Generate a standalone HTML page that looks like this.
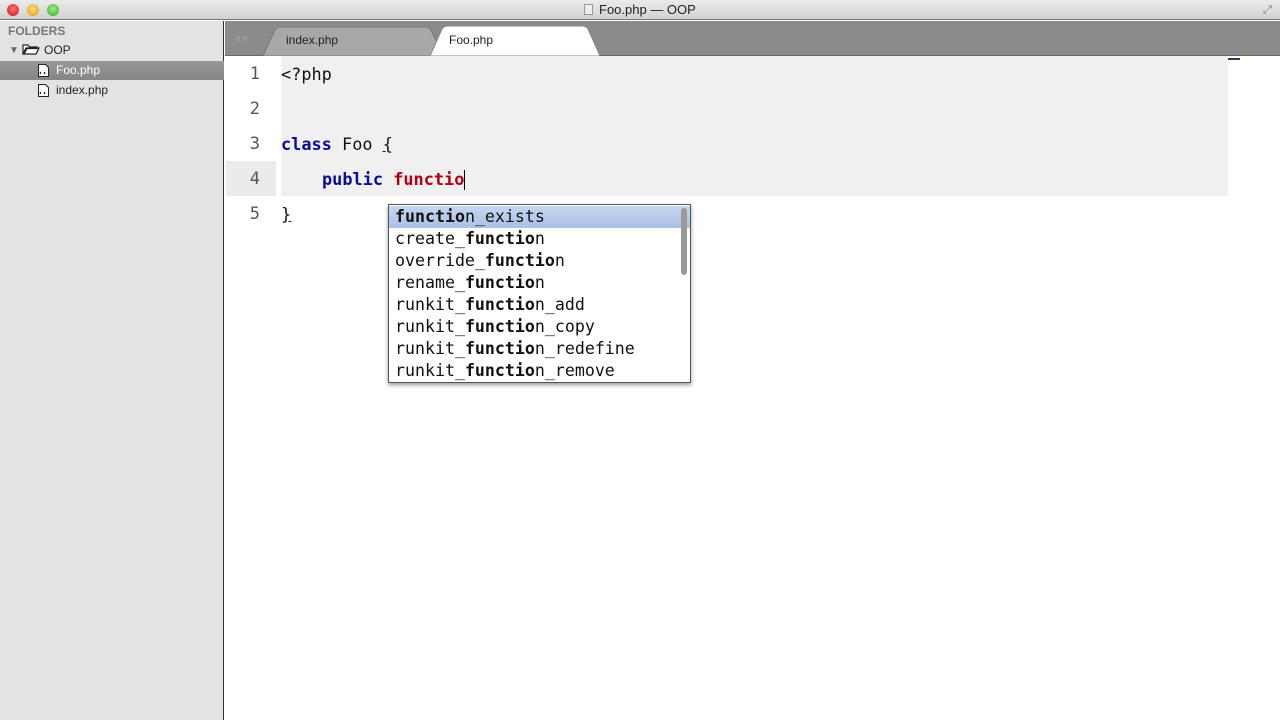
<!DOCTYPE html>
<html><head><meta charset="utf-8"><style>
*{margin:0;padding:0;box-sizing:border-box}
body{width:1280px;height:720px;overflow:hidden;background:#fff;font-family:"Liberation Sans",sans-serif;position:relative}
.abs{position:absolute}
.mono{font-family:"DejaVu Sans Mono","Liberation Mono",monospace}
.code{font-size:16.9px;color:#111;white-space:pre}
.ln{font-size:17px;color:#555;width:40px;text-align:right;left:220px}
.kw{color:#0a0a9c;font-weight:bold}
.fn{color:#b00010;font-weight:bold}
.pop div{height:22px;line-height:22px;padding-left:6px;font-size:16.6px;color:#111;white-space:pre}
.pop b{font-weight:bold}
</style></head><body>
<div class="abs" style="left:0;top:0;width:1280px;height:20px;background:linear-gradient(#ebebeb,#d2d2d2);border-bottom:1px solid #777"></div>
<div class="abs" style="left:7px;top:4px;width:12px;height:12px;border-radius:50%;background:radial-gradient(circle at 50% 40%,#f77,#c11)"></div>
<div class="abs" style="left:27px;top:4px;width:12px;height:12px;border-radius:50%;background:radial-gradient(circle at 50% 40%,#fd8,#d90)"></div>
<div class="abs" style="left:47px;top:4px;width:12px;height:12px;border-radius:50%;background:radial-gradient(circle at 50% 40%,#9e8,#3a2)"></div>
<div class="abs" style="left:584px;top:4px;width:9px;height:11px;border:1px solid #999;background:#eee"></div>
<div class="abs" style="left:599px;top:2px;font-size:13px;color:#222">Foo.php — OOP</div>
<div class="abs" style="left:1263px;top:4px;font-size:11px;color:#777">⤢</div>
<div class="abs" style="left:0;top:21px;width:224px;height:699px;background:#e3e3e3;border-right:1px solid #333"></div>
<div class="abs" style="left:8px;top:24px;font-size:12px;font-weight:bold;color:#777">FOLDERS</div>
<div class="abs" style="left:9px;top:45px;font-size:10px;color:#666">▼</div>
<svg class="abs" style="left:22px;top:43px" width="18" height="13"><path d="M1 2h5l1.5 2H15v1.5H5L2 11H1zM1 11l3-6h13l-3 6z" fill="#fff" stroke="#222" stroke-width="1.2"/></svg>
<div class="abs" style="left:44px;top:43px;font-size:12px;color:#222">OOP</div>
<div class="abs" style="left:0;top:61px;width:224px;height:19px;background:linear-gradient(#999,#858585)"></div>
<svg class="abs" style="left:38px;top:64px" width="11" height="13"><path d="M.5.5h7l3 3v9h-10z" fill="#fff" stroke="#222"/><path d="M3 8l-1 1 1 1M6 8l1 1-1 1" stroke="#222" fill="none"/></svg>
<div class="abs" style="left:56px;top:63px;font-size:12px;color:#fff">Foo.php</div>
<svg class="abs" style="left:38px;top:84px" width="11" height="13"><path d="M.5.5h7l3 3v9h-10z" fill="#fff" stroke="#222"/><path d="M3 8l-1 1 1 1M6 8l1 1-1 1" stroke="#222" fill="none"/></svg>
<div class="abs" style="left:56px;top:83px;font-size:12px;color:#222">index.php</div>
<div class="abs" style="left:225px;top:21px;width:1055px;height:35px;background:#8b8b8b;border-bottom:1px solid #666"></div>
<div class="abs" style="left:233px;top:33px;font-size:9px;color:#999">◀ ▶</div>
<svg class="abs" style="left:225px;top:21px" width="420" height="35">
<path d="M38 35 L50 9 Q52 6 56 6 L200 6 Q204 6 206 9 L218 35Z" fill="#a8a8a8" stroke="#7a7a7a"/>
<path d="M205 35 L217 8 Q219 5 223 5 L357 5 Q361 5 363 8 L375 35Z" fill="#fff" stroke="#888"/>
</svg>
<div class="abs" style="left:286px;top:33px;font-size:12px;color:#222">index.php</div>
<div class="abs" style="left:449px;top:33px;font-size:12px;color:#222">Foo.php</div>
<div class="abs" style="left:281px;top:56px;width:947px;height:140px;background:#f0f0f0"></div>
<div class="abs" style="left:226px;top:161px;width:50px;height:35px;background:#ebebeb"></div>
<div class="abs" style="left:1228px;top:58px;width:12px;height:6px;border-top:2px solid #336;"></div>
<div class="abs mono ln" style="top:64px">1</div>
<div class="abs mono ln" style="top:99px">2</div>
<div class="abs mono ln" style="top:134px">3</div>
<div class="abs mono ln" style="top:169px">4</div>
<div class="abs mono ln" style="top:204px">5</div>
<div class="abs mono code" style="left:281px;top:64px">&lt;?php</div>
<div class="abs mono code" style="left:281px;top:134px"><span class="kw">class</span> Foo <u>{</u></div>
<div class="abs mono code" style="left:322px;top:169px"><span class="kw">public</span> <span class="fn">functio</span></div>
<div class="abs" style="left:464px;top:170px;width:1px;height:20px;background:#000"></div>
<div class="abs mono code" style="left:281px;top:204px"><u>}</u></div>
<div class="abs pop mono" style="left:388px;top:204px;width:303px;height:179px;background:#fff;border:1px solid #555;box-shadow:0 2px 4px rgba(0,0,0,.4);padding-top:1px">
<div style="background:linear-gradient(#c6d7ef,#a9c1e6)"><b>functio</b>n_exists</div>
<div>create_<b>functio</b>n</div>
<div>override_<b>functio</b>n</div>
<div>rename_<b>functio</b>n</div>
<div>runkit_<b>functio</b>n_add</div>
<div>runkit_<b>functio</b>n_copy</div>
<div>runkit_<b>functio</b>n_redefine</div>
<div>runkit_<b>functio</b>n_remove</div>
</div>
<div class="abs" style="left:681px;top:208px;width:6px;height:67px;border-radius:3px;background:#999"></div>
</body></html>
